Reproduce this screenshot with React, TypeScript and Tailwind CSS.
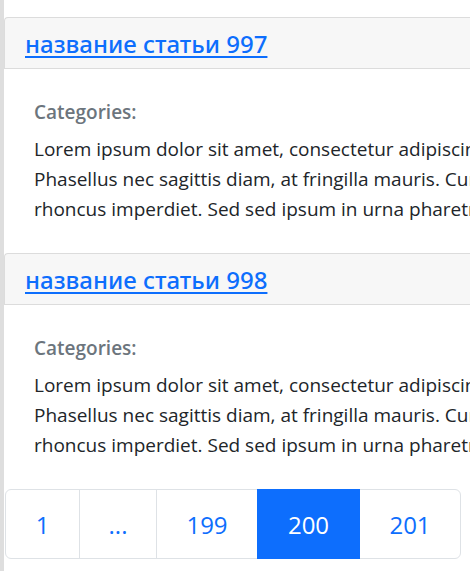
const articles = [
  { id: 997, title: 'название статьи 997' },
  { id: 998, title: 'название статьи 998' },
];

const lines = [
  'Lorem ipsum dolor sit amet, consectetur adipiscing elit.',
  'Phasellus nec sagittis diam, at fringilla mauris. Curabitur',
  'rhoncus imperdiet. Sed sed ipsum in urna pharetra',
];

const pages = [
  { label: '1', size: 'w-[73px]' },
  { label: '...', size: 'w-[76px]' },
  { label: '199', size: 'w-[100px]' },
  { label: '200', size: 'w-[103px]' },
  { label: '201', size: 'w-[100px]' },
];

function Article({ title }: { title: string }) {
  return (
    <article className="h-[236px]">
      <header className="flex h-[52px] items-center rounded-tl border-y border-l border-[#dcdcdc] bg-[#f7f7f7] px-5 pt-0.5">
        <h2 className="font-['Noto_Sans','Open_Sans',sans-serif] text-2xl font-medium whitespace-nowrap">
          <a href="#" className="text-[#0d6efd] underline decoration-2 underline-offset-3">
            {title}
          </a>
        </h2>
      </header>
      <div className="px-[30px] pt-7">
        <h3 className="text-[19px] leading-[30px] font-semibold text-[#6c757d]">Categories:</h3>
        <p className="mt-[7px] text-[19px] leading-[30px] whitespace-nowrap text-[#212529]">
          {lines.map((line) => (
            <span key={line} className="block">
              {line}
            </span>
          ))}
        </p>
      </div>
    </article>
  );
}

export default function App() {
  return (
    <main className="min-h-screen overflow-hidden border-l-4 border-[#dedede] bg-white pt-[17px] font-['Open_Sans','Noto_Sans',sans-serif]">
      {articles.map((article) => (
        <Article key={article.id} title={article.title} />
      ))}
      <nav aria-label="Pages" className="flex pl-px">
        <ul className="flex h-[70px] rounded-md border border-[#dee2e6]">
          {pages.map(({ label, size }) => {
            const active = label === '200';
            return (
              <li
                key={label}
                className={active ? '-my-px' : 'border-l border-[#dee2e6] first:border-l-0 last:border-l-0'}
              >
                <a
                  href="#"
                  aria-current={active ? 'page' : undefined}
                  className={`flex h-full items-center justify-center pt-0.5 text-2xl ${size} ${
                    active ? 'bg-[#0d6efd] text-white' : 'text-[#0d6efd]'
                  }`}
                >
                  {label}
                </a>
              </li>
            );
          })}
        </ul>
      </nav>
    </main>
  );
}
